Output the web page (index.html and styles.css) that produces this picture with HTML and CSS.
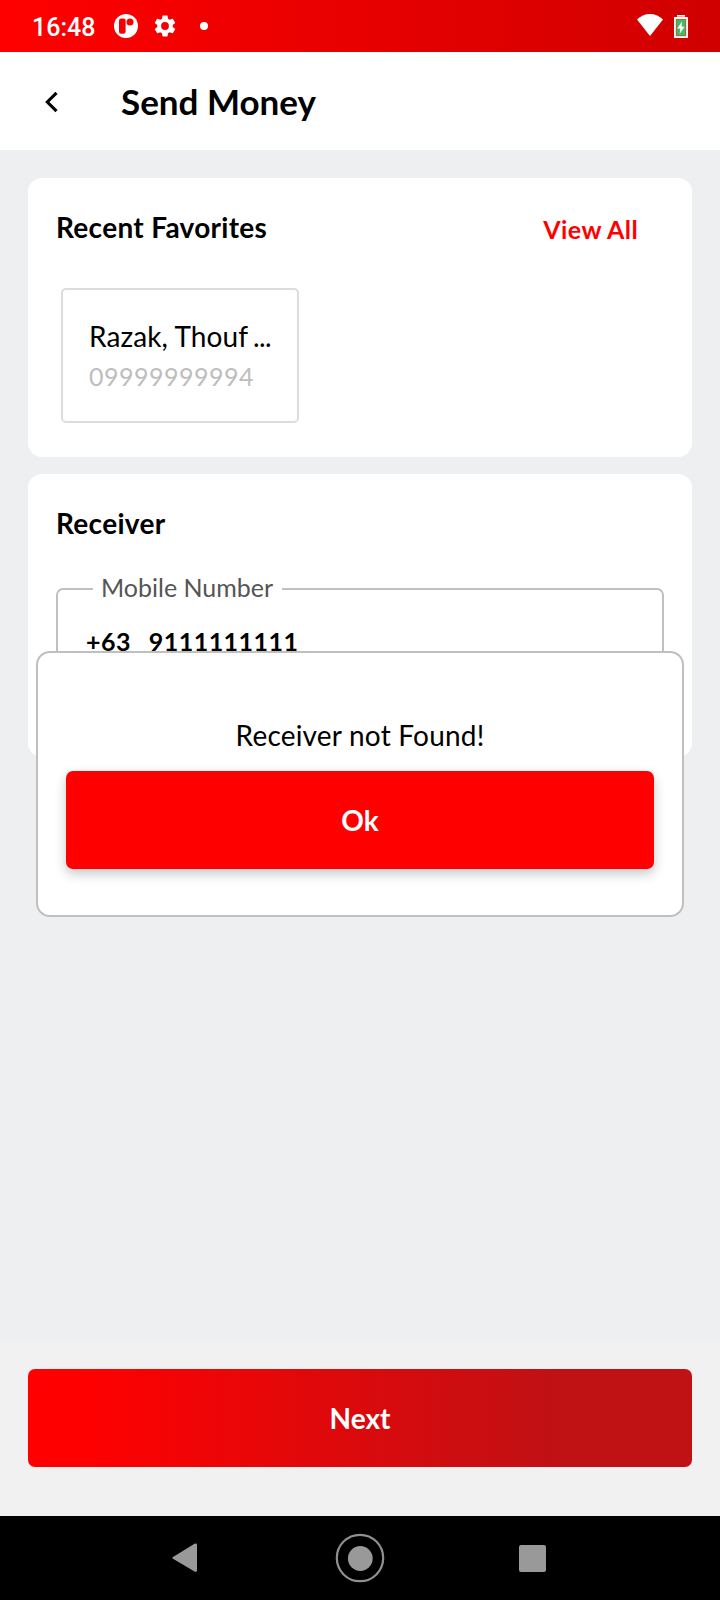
FILE: index.html
```html
<!DOCTYPE html>
<html lang="en">
<head>
<meta charset="utf-8">
<title>Send Money</title>
<link rel="stylesheet" href="styles.css">
</head>
<body>
<div class="screen">
  <div class="status">
    <span class="time">16:48</span>
    <svg class="ic-app" width="24" height="24" viewBox="0 0 24 24"><circle cx="12" cy="12" r="12" fill="#fff"/><rect x="5" y="4.400" width="6.600" height="15.400" rx="2.200" fill="#f90000"/><circle cx="16" cy="7.900" r="3.500" fill="#f90000"/></svg>
    <svg class="ic-gear" width="26" height="26" viewBox="0 0 24 24"><path fill="#fff" d="M19.140 12.940c.04-.3.06-.61.06-.94 0-.32-.02-.64-.07-.94l2.030-1.580c.18-.14.23-.41.12-.61l-1.920-3.320c-.12-.22-.37-.29-.59-.22l-2.390.96c-.5-.38-1.030-.7-1.620-.94l-.36-2.540c-.04-.24-.24-.41-.48-.41h-3.840c-.24 0-.43.17-.47.41l-.36 2.540c-.59.24-1.130.57-1.620.94l-2.390-.96c-.22-.08-.47 0-.59.22L2.740 8.870c-.12.21-.08.47.12.61l2.030 1.580c-.05.3-.09.63-.09.94s.02.64.07.94l-2.030 1.580c-.18.14-.23.41-.12.61l1.920 3.320c.12.22.37.29.59.22l2.390-.96c.5.38 1.030.7 1.620.94l.36 2.540c.05.24.24.41.48.41h3.840c.24 0 .44-.17.47-.41l.36-2.540c.59-.24 1.130-.56 1.620-.94l2.390.96c.22.08.47 0 .59-.22l1.920-3.320c.12-.22.07-.47-.12-.61zM12 15.600A3.600 3.600 0 1 1 12 8.400a3.600 3.600 0 0 1 0 7.200z"/></svg>
    <span class="dot"></span>
    <svg class="ic-wifi" width="26" height="22" viewBox="0 0 26 22"><path fill="#fff" d="M0 5.600C3.600 2 8 0 13 0s9.400 2 13 5.600L13 22z"/></svg>
    <svg class="ic-batt" width="14" height="23" viewBox="0 0 14 23"><path fill="#fff" d="M3 0h8v2h2.400q.6 0 .6.600V22.400q0 .6-.6.600H.6q-.6 0-.6-.6V2.600Q0 2 .6 2H3z"/><path fill="#f0a0a0" d="M3 1h8v1H3z"/><path fill="#c75b3c" d="M1.800 4h10.400v17.200H1.800z"/><path fill="#35c163" d="M2.900 5h8.200v15.200H2.900z"/><path fill="#fff" d="M8 6.500 3.300 13.400h3L5.700 18.800l4.900-7H7.600z"/></svg>
  </div>
  <header class="header">
    <svg class="back" width="14" height="22" viewBox="0 0 14 22"><path d="M11.500 1.800 2.300 11l9.200 9.200" fill="none" stroke="#000" stroke-width="3.100"/></svg>
    <h1 class="title">Send Money</h1>
  </header>
  <main class="content">
    <section class="card favorites">
      <div class="card-head">
        <h2 class="heading">Recent Favorites</h2>
        <a class="view-all">View All</a>
      </div>
      <div class="fav">
        <div class="fav-name">Razak, Thouf <span class="dots">...</span></div>
        <div class="fav-phone">09999999994</div>
      </div>
    </section>
    <section class="card receiver">
      <h2 class="heading">Receiver</h2>
      <fieldset class="field">
        <legend class="label">Mobile Number</legend>
        <div class="value"><span>+63</span><span>9111111111</span></div>
      </fieldset>
    </section>
  </main>
  <footer class="footer">
    <div class="next">Next</div>
  </footer>
  <nav class="nav">
    <svg class="nav-back" width="26" height="30" viewBox="0 0 26 30"><path d="M1 14 22.500.700Q25 0 25 2V27.500q0 2-2.500 1L1 15.800Q-.3 15 1 14z" fill="#999"/></svg>
    <svg class="nav-home" width="50" height="50" viewBox="0 0 50 50"><circle cx="25" cy="25" r="23.200" fill="none" stroke="#8f8f8f" stroke-width="2.200"/><circle cx="25.300" cy="25.500" r="12.400" fill="#999"/></svg>
    <span class="nav-recent"></span>
  </nav>
  <div class="dialog">
    <p class="message">Receiver not Found!</p>
    <div class="ok">Ok</div>
  </div>
</div>
</body>
</html>
```
FILE: styles.css
```css
* { box-sizing: border-box; margin: 0; padding: 0; }
body { font-family: Lato, "Liberation Sans", sans-serif; color: #000; }
.screen { position: relative; width: 720px; height: 1600px; display: flex; flex-direction: column; background: #edeff1; overflow: hidden; }
.status { height: 52px; flex: none; display: flex; align-items: center; padding: 0 32px; background: linear-gradient(90deg, #f00, #d00000); }
.time { width: 82px; font: 500 25px/52px Roboto, sans-serif; color: #fff; padding-top: 3px; }
.ic-gear { margin-left: 14px; }
.dot { width: 8px; height: 8px; border-radius: 50%; background: #fff; margin-left: 22px; }
.ic-wifi { margin-left: auto; margin-right: 11px; margin-top: -3px; }
.header { height: 98px; flex: none; display: flex; align-items: center; padding-left: 45px; background: #fff; }
.back { margin-top: 2px; }
.title { margin-left: 62px; padding-bottom: 1px; font-size: 35px; line-height: 44px; font-weight: 700; }
.content { flex: 1; padding: 28px 28px 0; display: flex; flex-direction: column; gap: 17px; }
.card { background: #fff; border-radius: 14px; padding: 28px; }
.favorites { height: 279px; }
.receiver { height: 283px; }
.card-head { display: flex; justify-content: space-between; padding-right: 26px; }
.heading { font-size: 28px; line-height: 42px; font-weight: 700; letter-spacing: 0.3px; }
.view-all { font-size: 25px; line-height: 46px; font-weight: 700; letter-spacing: 0.4px; color: #f00; }
.fav { width: 238px; height: 135px; margin: 36px 0 0 5px; border: 2px solid #dcdcdc; border-radius: 5px; padding: 26px 0 0 26px; white-space: nowrap; }
.fav-name { font-size: 28px; line-height: 40px; letter-spacing: 0.1px; }
.dots { letter-spacing: -0.5px; margin-left: -2px; }
.fav-phone { font-size: 25px; line-height: 40px; letter-spacing: 0.5px; color: #bdbdbd; }
.field { height: 128px; margin-top: 30px; border: 2px solid #c0c0c0; border-radius: 7px; padding-left: 28px; }
.label { margin-left: 7px; padding: 0 9px 4px 8px; font-size: 25px; line-height: 26px; color: #555; }
.value { display: flex; gap: 18px; font-size: 25px; line-height: 40px; font-weight: 700; letter-spacing: 0.45px; padding-top: 17px; }
.footer { height: 175px; flex: none; padding: 28px; background: #f1f1f1; }
.next { height: 98px; border-radius: 7px; background: linear-gradient(90deg, #f00 8%, #c01115 80%); }
.next, .ok { color: #fff; font-size: 28px; line-height: 98px; font-weight: 700; text-align: center; }
.nav { height: 84px; flex: none; display: flex; align-items: center; padding-left: 172px; background: #000; }
.nav-home { margin-left: 137px; }
.nav-recent { width: 27px; height: 27px; margin: 1px 0 0 134px; border-radius: 2px; background: #999; }
.dialog { position: absolute; left: 36px; top: 651px; width: 648px; height: 266px; border: 2px solid #bfbfbf; border-radius: 14px; background: #fff; padding: 62px 28px 0; }
.message { font-size: 28px; line-height: 40px; letter-spacing: 0.2px; text-align: center; }
.ok { height: 98px; margin-top: 16px; border-radius: 7px; background: #f00; box-shadow: 0 5px 12px rgba(0,0,0,.22); }
```
